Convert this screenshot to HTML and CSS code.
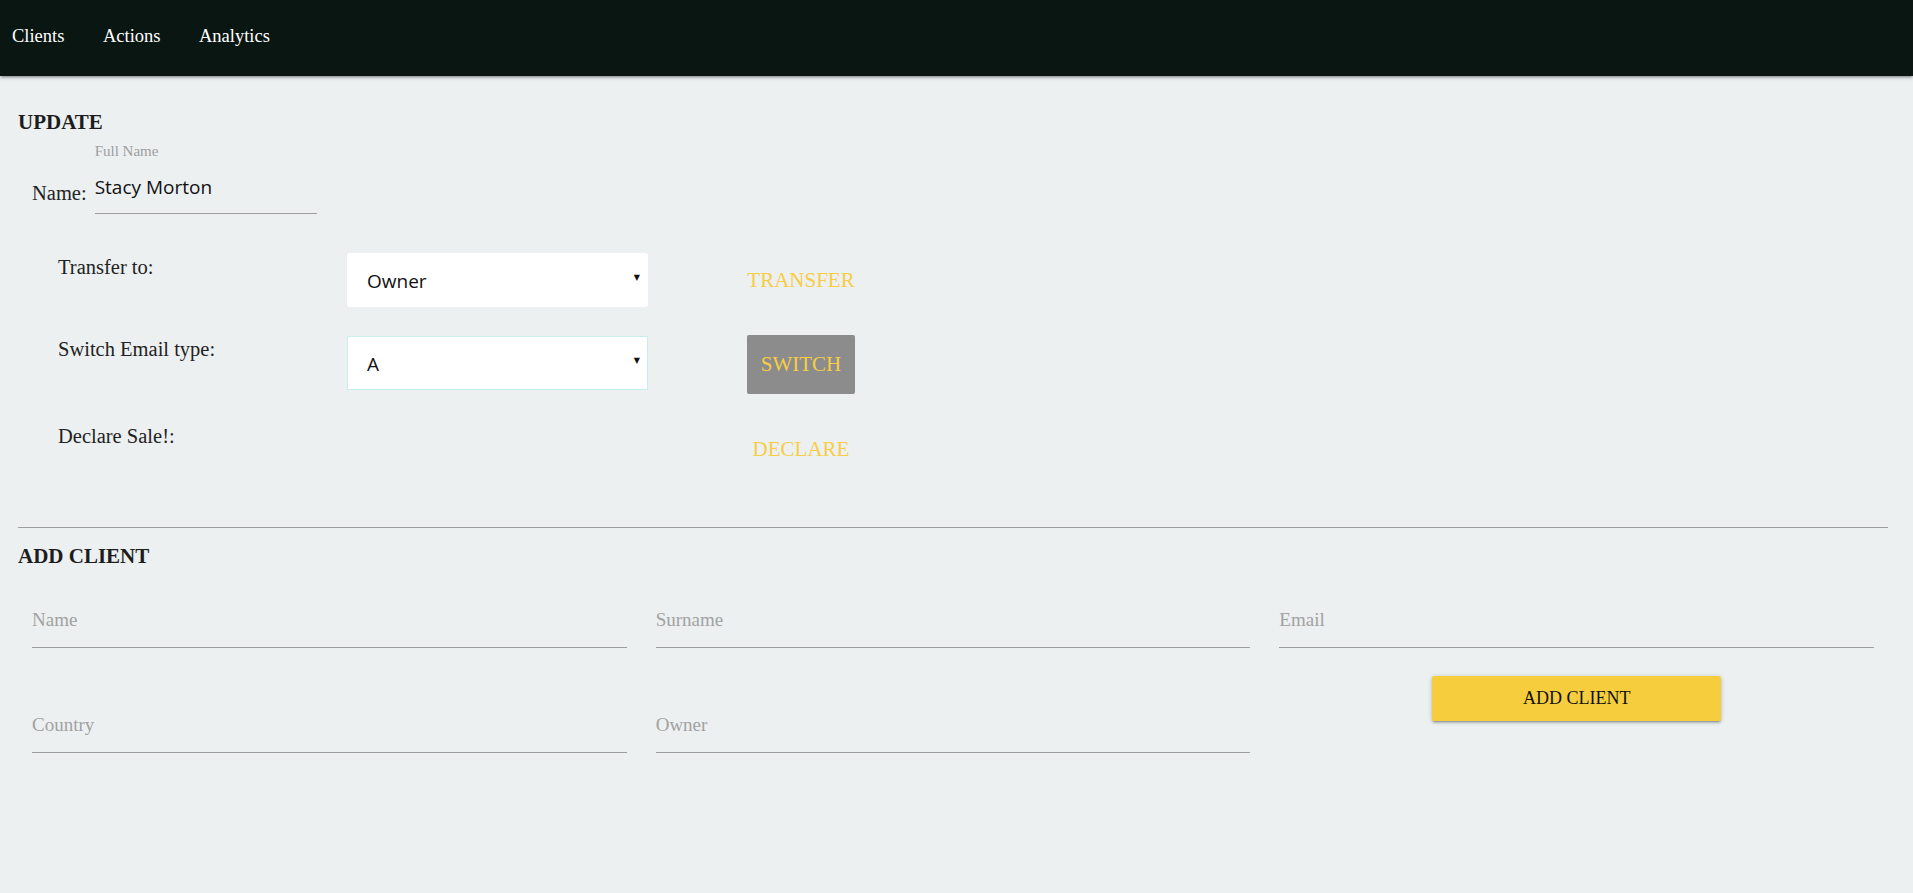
FILE: index.html
```html
<!DOCTYPE html>
<html lang="en">
<head>
  <meta charset="UTF-8">
  <title>Clients CRM</title>
  <link rel="stylesheet" href="styles.css">
</head>
<body>
  <nav class="top-nav">
    <a href="#">Clients</a>
    <a href="#">Actions</a>
    <a href="#">Analytics</a>
  </nav>

  <main class="page">
    <section class="update">
      <h4 class="section-title">UPDATE</h4>

      <div class="name-row">
        <span class="name-label">Name:</span>
        <div class="name-field">
          <label for="fullName">Full Name</label>
          <input id="fullName" type="text" value="Stacy Morton">
        </div>
      </div>

      <div class="actions">
        <div class="action-label">Transfer to:</div>
        <div class="select-wrap">
          <select>
            <option>Owner</option>
          </select>
        </div>
        <button class="btn-flat">TRANSFER</button>

        <div class="action-label">Switch Email type:</div>
        <div class="select-wrap outlined">
          <select>
            <option>A</option>
            <option>B</option>
            <option>C</option>
          </select>
        </div>
        <button class="btn-flat btn-switch">SWITCH</button>

        <div class="action-label">Declare Sale!:</div>
        <div></div>
        <button class="btn-flat">DECLARE</button>
      </div>
    </section>

    <hr class="divider">

    <section class="add-client">
      <h4 class="section-title">ADD CLIENT</h4>

      <div class="client-form">
        <div class="field"><input type="text" placeholder="Name"></div>
        <div class="field"><input type="text" placeholder="Surname"></div>
        <div class="field"><input type="text" placeholder="Email"></div>

        <div class="field low"><input type="text" placeholder="Country"></div>
        <div class="field low"><input type="text" placeholder="Owner"></div>
        <div class="btn-cell"><button class="btn-add">ADD CLIENT</button></div>
      </div>
    </section>
  </main>
</body>
</html>
```

FILE: styles.css
```css
body {
  margin: 0;
  font-family: 'Liberation Serif', 'Times New Roman', serif;
  font-size: 20.5px;
  color: #222;
  background-color: #ecf0f1;
}

.top-nav {
  display: flex;
  gap: 38.5px;
  height: 76px;
  padding-left: 12px;
  background-color: #0a1612;
  box-shadow: 0 2px 2px 0 rgba(0, 0, 0, 0.14), 0 3px 1px -2px rgba(0, 0, 0, 0.12), 0 1px 5px 0 rgba(0, 0, 0, 0.2);
}

.top-nav a {
  color: #fff;
  text-decoration: none;
  font-size: 18.5px;
  line-height: 73px;
}

.page {
  padding: 0 25px 0 18px;
}

.section-title {
  margin: 34px 0 0;
  font-size: 21px;
  line-height: 24px;
  font-weight: bold;
  color: #1d1d1d;
}

/* name field */
.name-row {
  display: flex;
  align-items: flex-end;
  gap: 8px;
  margin-top: 8px;
  padding-left: 14px;
}

.name-label {
  line-height: 24px;
  margin-bottom: 9px;
}

.name-field {
  display: flex;
  flex-direction: column;
  width: 222px;
}

.name-field label {
  font-size: 15px;
  line-height: 18px;
  color: #9e9e9e;
}

.name-field input {
  height: 53px;
  padding: 0;
  border: none;
  border-bottom: 1px solid #9e9e9e;
  background: transparent;
  outline: none;
  font-family: 'Open Sans', 'Noto Sans', sans-serif;
  font-size: 19px;
  color: #111;
}

/* transfer / switch / declare */
.actions {
  display: grid;
  grid-template-columns: 289px 301px 306px;
  row-gap: 28px;
  align-items: start;
  margin-top: 39px;
  padding-left: 40px;
}

.action-label {
  margin-top: 2px;
  line-height: 24px;
}

.select-wrap {
  position: relative;
  height: 54px;
}

.select-wrap.outlined {
  margin-top: 1px;
}

.select-wrap select {
  width: 100%;
  height: 100%;
  padding: 2px 0 0 19px;
  border: 1px solid #fff;
  border-radius: 2px;
  background-color: #fff;
  font-family: 'Open Sans', 'Noto Sans', sans-serif;
  font-size: 19px;
  color: #111;
  appearance: none;
  -webkit-appearance: none;
  outline: none;
}

.select-wrap.outlined select {
  border-color: #c6efee;
  border-radius: 0;
}

.select-wrap::after {
  content: "\25BC";
  position: absolute;
  right: 8px;
  top: 20px;
  font-family: 'DejaVu Sans', sans-serif;
  font-size: 8px;
  color: #111;
  pointer-events: none;
}

.btn-flat {
  justify-self: center;
  height: 54px;
  padding: 0 14px;
  border: none;
  border-radius: 2px;
  background: transparent;
  font-family: 'Liberation Serif', 'Times New Roman', serif;
  font-size: 21px;
  color: #f7cd45;
  cursor: pointer;
}

.btn-switch {
  height: 59px;
  background-color: #8c8c8c;
}

.divider {
  margin: 51px 0 0;
  border: none;
  border-top: 1px solid #9e9e9e;
}

.add-client .section-title {
  margin-top: 16px;
}

/* add client form */
.client-form {
  display: grid;
  grid-template-columns: repeat(3, 1fr);
  column-gap: 29px;
  row-gap: 28px;
  align-items: start;
  margin-top: 19px;
  padding: 0 14px;
}

.field input {
  width: 100%;
  height: 55px;
  padding: 5px 0 0;
  border: none;
  border-bottom: 1px solid #9e9e9e;
  background: transparent;
  outline: none;
  font-family: 'Liberation Serif', 'Times New Roman', serif;
  font-size: 19px;
  color: #222;
}

.field input::placeholder {
  color: #a2a2a2;
}

.field.low {
  margin-top: 16px;
}

.btn-cell {
  display: flex;
  justify-content: center;
}

.btn-add {
  width: 289px;
  height: 45px;
  border: none;
  border-radius: 2px;
  background-color: #f6ce3d;
  font-family: 'Liberation Serif', 'Times New Roman', serif;
  font-size: 18px;
  color: #111;
  box-shadow: 0 2px 2px 0 rgba(0, 0, 0, 0.14), 0 3px 1px -2px rgba(0, 0, 0, 0.12), 0 1px 5px 0 rgba(0, 0, 0, 0.2);
  cursor: pointer;
}
```
